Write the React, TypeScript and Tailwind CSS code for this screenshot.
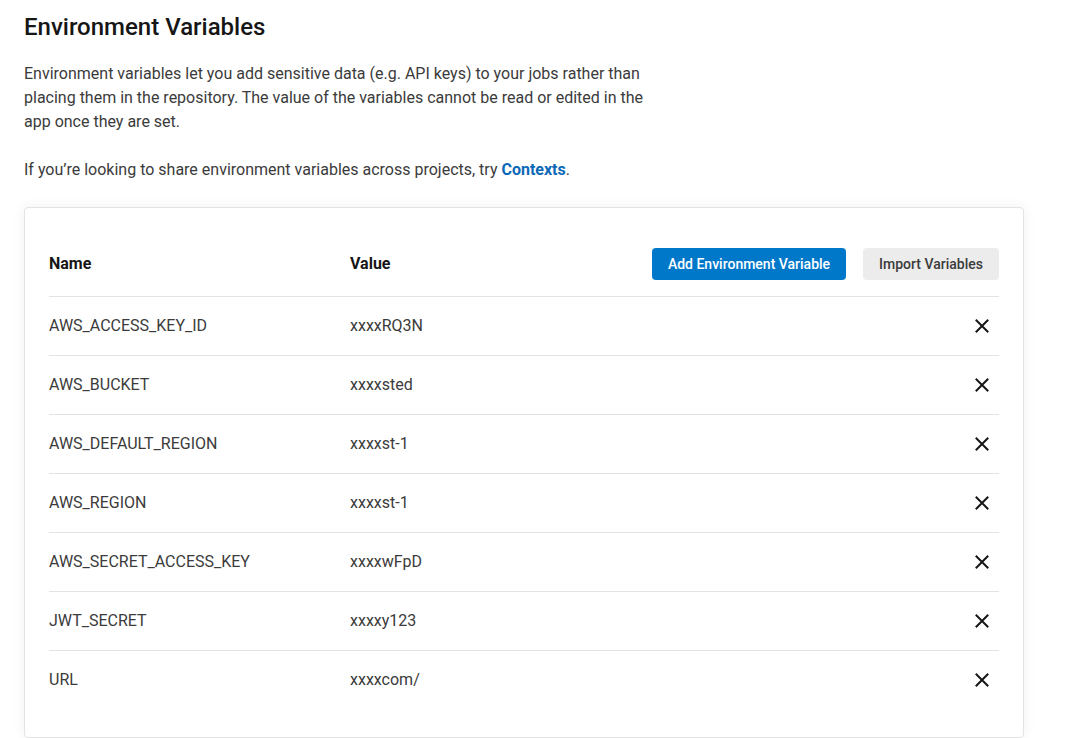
import React from "react";

const rows: [string, string][] = [
  ["AWS_ACCESS_KEY_ID", "xxxxRQ3N"],
  ["AWS_BUCKET", "xxxxsted"],
  ["AWS_DEFAULT_REGION", "xxxxst-1"],
  ["AWS_REGION", "xxxxst-1"],
  ["AWS_SECRET_ACCESS_KEY", "xxxxwFpD"],
  ["JWT_SECRET", "xxxxy123"],
  ["URL", "xxxxcom/"],
];

function XIcon() {
  return (
    <svg width="14" height="14" viewBox="0 0 14 14" fill="none">
      <path d="M1.5 1.5 L12.5 12.5 M12.5 1.5 L1.5 12.5" stroke="#161616" strokeWidth="2" strokeLinecap="square" />
    </svg>
  );
}

export default function App() {
  return (
    <div className="min-h-screen bg-white pl-6 pt-[13px] text-[#3b3b3b]" style={{ fontFamily: "Roboto, 'Liberation Sans', sans-serif" }}>
      <h1 className="text-[24px] leading-[28px] font-medium text-[#161616]">Environment Variables</h1>
      <p className="mt-[21px] w-[640px] text-[16px] leading-[24px] text-[#3b3b3b]">
        Environment variables let you add sensitive data (e.g. API keys) to your jobs rather than placing them in the repository. The value of the variables cannot be read or edited in the app once they are set.
      </p>
      <p className="mt-6 text-[16px] leading-[24px] text-[#3b3b3b]">
        If you’re looking to share environment variables across projects, try{" "}
        <a className="font-bold text-[#0b69b8]">Contexts</a>.
      </p>
      <div className="mt-[25px] w-[1000px] rounded-[4px] border border-[#e3e3e3] bg-white px-6 pt-6 pb-[27px] shadow-[0_0_14px_rgba(0,0,0,0.06)]">
        <div className="flex h-[65px] items-center border-b border-[#e3e3e3]">
          <div className="w-[301px] text-[16px] font-bold text-[#161616]">Name</div>
          <div className="flex-1 text-[16px] font-bold text-[#161616]">Value</div>
          <button className="h-8 w-[194px] rounded-[4px] bg-[#0078ca] text-[14px] font-medium text-white">Add Environment Variable</button>
          <button className="ml-[17px] h-8 w-[136px] rounded-[4px] bg-[#ececec] text-[14px] font-medium text-[#3b3b3b]">Import Variables</button>
        </div>
        {rows.map(([n, v], i) => (
          <div key={n} className={"flex h-[59px] items-center border-b text-[16px] text-[#3b3b3b] " + (i < rows.length - 1 ? "border-[#e3e3e3]" : "border-transparent")}>
            <div className="w-[301px]">{n}</div>
            <div className="flex-1">{v}</div>
            <div className="flex w-[34px] items-center justify-center">
              <XIcon />
            </div>
          </div>
        ))}
      </div>
    </div>
  );
}
